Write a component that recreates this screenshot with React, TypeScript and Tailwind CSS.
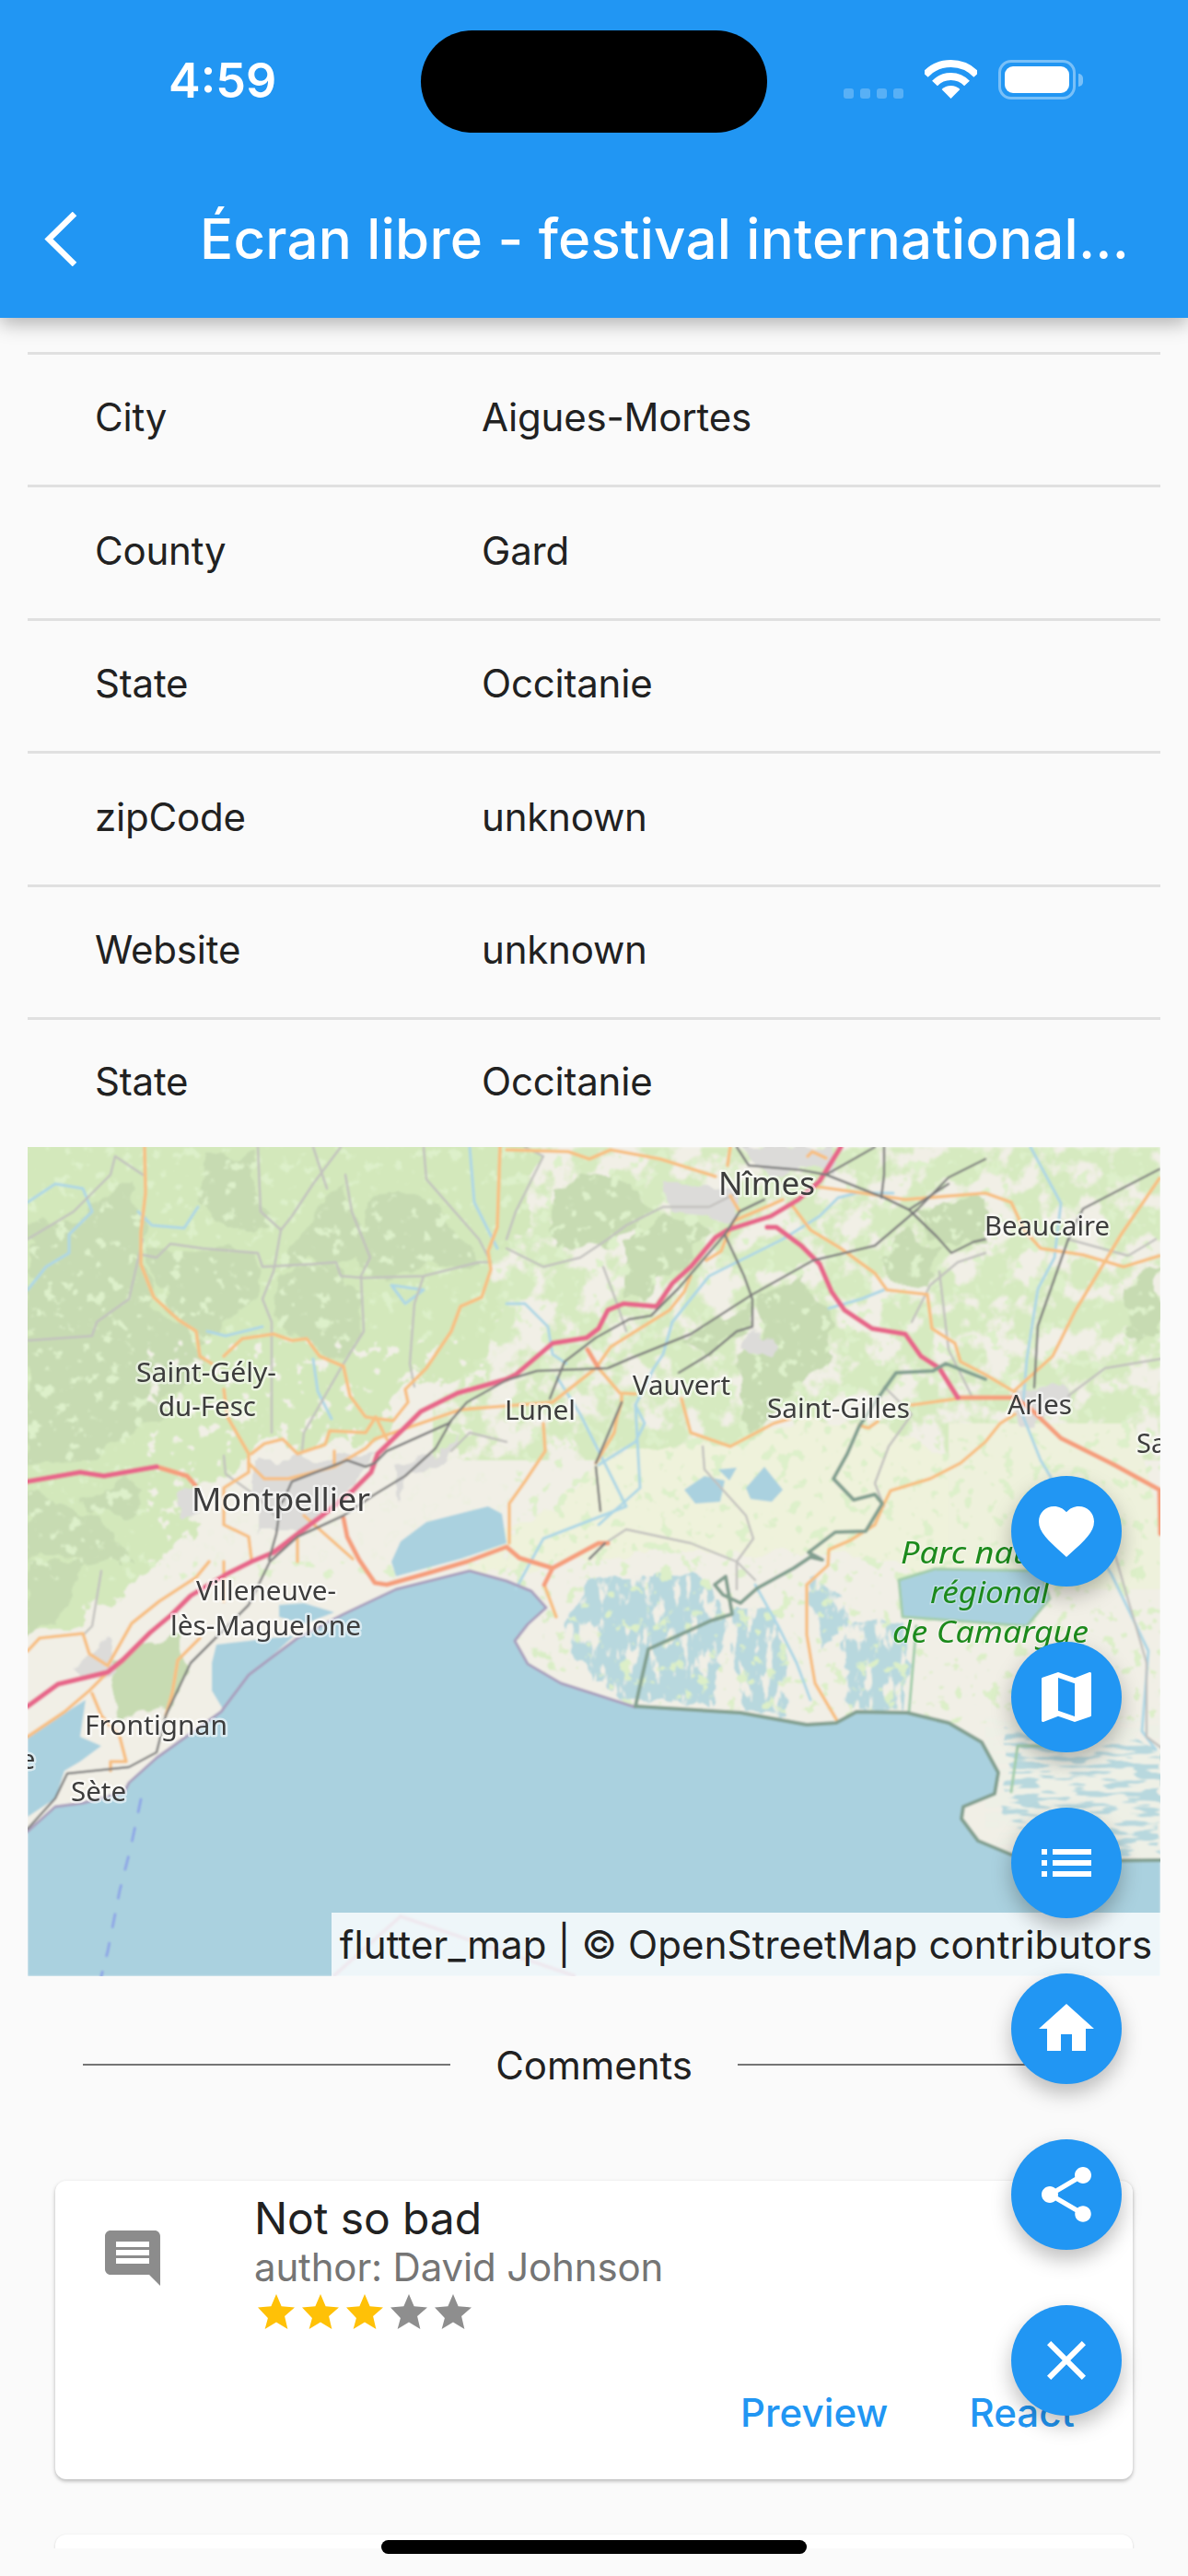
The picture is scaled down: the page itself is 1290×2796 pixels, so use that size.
import React from "react";

const MOTOR = [
  "883,0 860,37 837,57 807,75 760,90 747,98 720,130 700,148 683,173 647,170 630,177 620,197 607,207 570,213 530,247 520,252 467,267 427,287 407,307 380,333 373,353 353,373 320,400 293,420 267,440 243,450 217,463 177,487 157,507 133,527 103,557 87,570 33,583 0,607",
  "803,87 813,87 840,107 860,127 873,157 887,177 917,197 953,203 970,227 990,240 1010,272",
  "0,363 57,353 83,357 140,347",
];
const TRUNK = [
  "1010,272 1072,272 1090,285 1122,316 1180,345 1229,372 1230,420",
  "140,347 173,357 182,367",
  "343,403 347,423 360,448 377,473 390,475 433,463 477,450 520,434 534,446 570,457 620,430 630,430",
  "570,457 561,475",
  "608,220 620,240",
];
const PRIMARY = [
  "127,0 128,50 123,93 123,127 137,163 163,187 183,200 187,227 200,235",
  "213,227 233,208 267,203 287,210 303,208 317,227 343,238 350,270 367,293 397,297 413,277 410,263 433,240 460,200 470,173 493,163 503,133 500,113 510,87 513,0",
  "213,263 217,293 240,333 240,353 213,370 213,410 240,423 243,447",
  "243,333 257,322 277,317 293,333 323,323 328,308 367,310 378,293 390,317",
  "333,330 333,345",
  "240,343 257,360 283,360 333,347 367,327 377,317 470,285 570,277",
  "300,400 353,447",
  "0,547 13,533 60,528 67,550 87,563 113,517 143,493 183,467 197,450",
  "0,640 40,613 67,590 87,570",
  "70,593 80,617 100,640 107,667 90,667 90,677",
  "187,533 163,557 157,593 150,617",
  "213,493 213,450",
  "293,450 293,420",
  "570,277 617,240 633,217 660,200 697,177 713,157 720,140",
  "737,123 753,113 758,100 767,80 807,63 820,57",
  "520,3 587,5 610,13 633,3 687,13 747,32",
  "763,53 773,70",
  "760,20 763,0",
  "857,43 907,50 953,57 1040,50 1068,60 1082,90 1100,110 1146,117 1190,130 1229,118",
  "830,63 850,90 883,110 920,137 933,155 977,160 982,197 1007,213 1013,233 1040,247 1072,266",
  "847,10 852,5 867,12",
  "620,240 643,267 660,268",
  "645,270 645,277 640,293 637,310 617,343",
  "710,273 720,310 763,325 810,300 827,295",
  "560,300 562,330 540,363 523,387 523,430",
  "960,280 1010,273",
  "903,302 913,305 923,298",
  "1072,290 1056,300 1040,320 1013,343 980,360 937,373 930,387 920,410 893,427 870,437 869,454 846,475 846,529 855,582 878,621",
  "1229,34 1188,94 1138,177 1113,227 1072,264",
  "561,475 574,510",
];
const RAIL = [
  "1040,13 1000,33 967,67 920,107 887,115 853,123 787,160 720,203 653,230 630,240 553,243 520,253 477,277 457,300 390,330 377,343 367,347 347,340 287,363 277,385",
  "460,297 443,327 410,357 377,377 343,400 293,423 263,450 240,497 200,537 177,560 150,617 140,657 110,673 43,680 30,707 0,740",
  "567,273 583,233 617,207 653,187 677,183 707,153 757,95 773,70 800,57",
  "770,0 783,20 840,25 867,30 930,55 957,68 987,97 1003,115 1027,103 1040,100",
  "757,95 778,140 787,165 787,195 770,200 740,225 707,245",
  "930,0 930,30 927,55",
  "867,30 920,0",
  "957,68 1000,40",
  "275,385 270,420 262,448",
  "1229,24 1146,67 1130,100 1097,194 1093,261",
  "617,347 622,395",
  "627,430 610,447",
  "645,277 617,343",
];
const MINOR = [
  "0,100 50,70 90,30 95,10 125,30",
  "125,100 110,165 75,190 70,205 0,210",
  "125,117 140,120 155,105 190,110 250,115 255,130 310,127 335,125 340,140 365,142 430,140 490,125 503,125",
  "250,0 253,70 275,90 267,135 255,165 265,190 265,240 265,310",
  "340,0 310,40 287,75 275,90",
  "310,0 325,45",
  "345,30 352,70 372,120 362,140 365,200 340,240 300,310 298,330",
  "430,0 433,35 490,100 503,125",
  "430,140 420,170 415,235 420,260",
  "213,335 215,355 250,380 268,400",
  "80,460 70,520 60,530",
  "460,330 480,310 520,320",
  "540,0 560,10 530,70 520,100",
  "520,110 560,130 600,120 630,100 650,85 690,65 740,65 770,50",
  "625,130 640,170 650,200",
  "990,135 1000,220 1025,270",
  "930,260 960,290 935,325 920,365 930,390",
  "733,325 735,350 780,400 788,425 770,450 770,480",
  "627,430 650,415 720,430 770,450 790,470",
  "1180,440 1215,560 1215,640 1235,655",
  "1130,100 1195,118 1225,100",
  "1130,270 1170,240 1230,230",
  "960,190 980,150 1010,125 1040,115",
];
const RIVERS = [
  "0,60 30,40 60,45 70,70 45,95 45,115 20,130 0,155",
  "120,70 135,85 170,88 185,65",
  "195,200 215,205 255,195",
  "310,230 315,265 330,295",
  "395,150 430,155 410,170 395,150",
  "480,0 485,60 510,110",
  "520,170 540,170 565,195 570,225 585,235",
  "575,250 600,290 620,330 650,390 560,425 530,480",
  "620,345 660,320 670,300 660,280 665,370 620,410",
  "700,190 690,225 680,240 660,280",
  "700,190 740,140 780,120 820,100 860,75 880,55 900,50 940,50",
  "870,175 905,165 930,155",
  "1089,0 1122,61 1115,120 1097,154 1085,230 1080,290 1100,340 1130,390 1177,464 1217,547 1210,634 1225,654",
  "790,475 815,520 835,560 850,600",
];
const FORESTS = [
  "0,90 60,70 120,30 125,120 135,165 180,200 190,240 130,300 70,340 0,350",
  "130,105 250,115 255,135 225,190 190,210 165,185 135,150",
  "190,10 250,10 250,60 270,90 240,90 205,90 190,60",
  "275,130 335,125 360,165 360,210 340,230 310,210 265,190",
  "280,110 340,40 360,90 370,125 280,125",
  "370,60 430,50 470,100 490,125 370,140 360,110",
  "0,370 50,385 90,420 120,450 60,450 20,440 0,450",
  "0,450 60,450 45,500 0,530",
  "87,560 165,530 175,560 150,610 95,620",
  "570,50 600,30 650,35 680,70 640,100 600,115 570,110",
  "650,100 690,75 740,90 700,135 670,165 650,165",
  "710,210 780,170 785,195 740,225",
  "787,165 845,135 870,190 880,230 835,260 800,300 780,310 770,230 800,200",
  "960,70 1000,60 1040,60 1040,100 1003,113 985,95",
  "950,100 990,105 970,155 940,150 925,120",
  "1190,150 1230,130 1230,210 1200,215",
  "60,380 100,360 130,375 110,400 70,400",
];
const MARSH = [
  "600,470 640,465 700,465 740,470 755,490 750,560 745,605 660,600 610,575 585,520",
  "760,500 805,500 820,560 830,618 780,612 768,570",
  "885,515 950,515 960,560 955,612 890,612",
  "850,470 885,480 895,510 860,540",
  "1060,630 1100,620 1120,650 1200,640 1230,660 1230,770 1090,770 1060,720 1065,680",
];
const SEA =
  "0,743 30,716 60,712 105,700 110,690 140,663 210,613 240,573 293,533 343,507 400,480 480,460 520,471 547,482 563,500 543,518 529,536 543,561 579,582 660,608 774,614 846,627 878,625 900,613 955,614 1000,625 1036,646 1054,679 1050,702 1016,716 1014,729 1032,753 1068,768 1127,775 1230,774 1230,900 0,900";
const LAKES = [
  "395,450 405,428 433,407 500,390 515,398 520,430 470,447 400,466",
  "205,540 290,530 240,575 212,610 200,590 200,560",
  "273,497 300,495 333,505 300,518 273,510",
  "0,640 63,600 57,640 80,650 57,667 40,677 30,707 0,727",
  "713,372 735,357 757,362 752,385 725,387",
  "750,350 770,348 762,362",
  "780,370 800,347 820,372 808,385 785,382",
  "946,470 985,458 1100,460 1110,490 1085,520 950,510",
];
const LABELS: [string, number, number, number, number][] = [
  ["Nîmes", 750, 52, 105, 35],
  ["Montpellier", 178, 395, 194, 35],
  ["Saint-Gély-", 118, 255, 152, 29],
  ["du-Fesc", 142, 292, 106, 29],
  ["Lunel", 518, 296, 77, 29],
  ["Vauvert", 657, 269, 106, 29],
  ["Saint-Gilles", 803, 294, 155, 29],
  ["Beaucaire", 1039, 96, 136, 29],
  ["Arles", 1064, 290, 70, 29],
  ["Villeneuve-", 183, 492, 152, 29],
  ["lès-Maguelone", 155, 530, 207, 29],
  ["Frontignan", 62, 638, 155, 29],
  ["Sète", 47, 710, 60, 29],
];

function Poly({ list, color, width, dash }: { list: string[]; color: string; width: number; dash?: string }) {
  return (
    <g fill="none" stroke={color} strokeWidth={width} strokeLinejoin="round" strokeLinecap="round" strokeDasharray={dash}>
      {list.map((p, i) => (
        <polyline key={i} points={p} />
      ))}
    </g>
  );
}

function MapArt() {
  return (
    <svg viewBox="0 0 1230 900" className="block w-[1230px] h-[900px]" fontFamily="'Noto Sans', sans-serif">
      <defs>
        <filter id="soft" x="0" y="0" width="100%" height="100%">
          <feGaussianBlur stdDeviation="1.1" />
        </filter>
        <filter id="lbl" x="-5%" y="-20%" width="110%" height="140%">
          <feGaussianBlur stdDeviation="0.6" />
        </filter>
        <filter id="rough" x="-10%" y="-10%" width="120%" height="120%">
          <feTurbulence type="fractalNoise" baseFrequency="0.03" numOctaves="3" seed="4" result="n" />
          <feDisplacementMap in="SourceGraphic" in2="n" scale="30" xChannelSelector="R" yChannelSelector="G" />
        </filter>
        <filter id="rough2" x="-10%" y="-10%" width="120%" height="120%">
          <feTurbulence type="fractalNoise" baseFrequency="0.02" numOctaves="4" seed="11" result="n" />
          <feDisplacementMap in="SourceGraphic" in2="n" scale="90" xChannelSelector="R" yChannelSelector="G" />
        </filter>
        <filter id="speckA" x="0" y="0" width="100%" height="100%">
          <feTurbulence type="fractalNoise" baseFrequency="0.03" numOctaves="4" seed="9" result="n" />
          <feColorMatrix in="n" type="matrix" values="0 0 0 0 0 0 0 0 0 0 0 0 0 0 0 8 0 0 0 -3.3" result="m" />
          <feComposite in="SourceGraphic" in2="m" operator="in" />
        </filter>
        <filter id="speckB" x="0" y="0" width="100%" height="100%">
          <feTurbulence type="fractalNoise" baseFrequency="0.07" numOctaves="3" seed="21" result="n" />
          <feColorMatrix in="n" type="matrix" values="0 0 0 0 0 0 0 0 0 0 0 0 0 0 0 12 0 0 0 -7.4" result="m" />
          <feComposite in="SourceGraphic" in2="m" operator="in" />
        </filter>
        <filter id="speckC" x="0" y="0" width="100%" height="100%">
          <feTurbulence type="fractalNoise" baseFrequency="0.1 0.035" numOctaves="4" seed="5" result="n" />
          <feColorMatrix in="n" type="matrix" values="0 0 0 0 0 0 0 0 0 0 0 0 0 0 0 10 0 0 0 -5.6" result="m" />
          <feComposite in="SourceGraphic" in2="m" operator="in" />
        </filter>
        <filter id="stripes" x="0" y="0" width="100%" height="100%">
          <feTurbulence type="fractalNoise" baseFrequency="0.03 0.16" numOctaves="2" seed="14" result="n" />
          <feColorMatrix in="n" type="matrix" values="0 0 0 0 0 0 0 0 0 0 0 0 0 0 0 14 0 0 0 -6" result="m" />
          <feComposite in="SourceGraphic" in2="m" operator="in" />
        </filter>
      </defs>
      <g filter="url(#soft)">
        <rect width="1230" height="900" fill="#f1efe6" />
        <rect x="440" width="790" height="340" fill="#d6eac0" filter="url(#speckA)" />
        <polygon points="-60,-60 560,-60 520,120 500,220 420,280 360,330 230,330 180,410 130,470 60,520 -60,540" fill="#d3e8bb" filter="url(#rough2)" />
        <polygon points="470,470 500,420 560,400 640,330 760,320 840,300 930,300 1000,340 1060,300 1100,320 1100,420 1000,470 860,440 640,440" fill="#eff2db" filter="url(#rough)" />
        <polygon points="1000,300 1060,300 1200,300 1230,400 1230,480 1120,480 1000,440" fill="#eef1dc" />
        <g filter="url(#rough)" fill="#c7dbb2">
          {FORESTS.map((p, i) => (
            <polygon key={i} points={p} />
          ))}
        </g>
        <rect x="520" y="300" width="710" height="320" fill="#d9edc6" filter="url(#speckB)" />
        <rect width="1230" height="470" fill="#ddf0ca" filter="url(#speckB)" />
        <rect x="130" y="210" width="400" height="240" fill="#f1efe6" filter="url(#speckB)" />
        <g fill="#dcdbd9" filter="url(#rough)">
          <polygon points="770,0 880,0 870,25 790,25" />
          <polygon points="690,40 770,40 770,80 700,70" />
          <polygon points="250,335 380,335 350,370 300,420 250,420" />
          <polygon points="400,345 470,320 420,355 400,380" />
          <polygon points="165,370 190,370 190,400 165,400" />
          <polygon points="90,530 95,570 55,580 45,560" />
          <polygon points="1070,265 1130,260 1130,295 1085,300" />
          <polygon points="780,200 810,205 800,225 770,225" />
        </g>
        <g filter="url(#rough)" fill="#b8d8de">
          {MARSH.map((p, i) => (
            <polygon key={i} points={p} />
          ))}
        </g>
        <rect x="570" y="455" width="400" height="165" fill="#f1efe6" filter="url(#speckC)" />
        <rect x="1040" y="620" width="190" height="155" fill="#eef0e6" filter="url(#stripes)" />
        <rect x="570" y="455" width="660" height="170" fill="#dcefc8" filter="url(#speckB)" />
        <polygon points={SEA} fill="#aad1df" />
        <g fill="#aad1df">
          {LAKES.map((p, i) => (
            <polygon key={i} points={p} />
          ))}
        </g>
        <Poly list={["946,470 985,458 1100,460 1110,490 1085,520 950,510 946,470", "965,520 957,614", "1120,650 1075,650 1068,700"]} color="#a3cdab" width={3} />
        <Poly list={RIVERS} color="#aed7e5" width={3} />
        <Poly list={MINOR} color="#c2c1be" width={2.4} />
        <Poly list={["0,743 30,716 60,712 105,700 110,690 140,663 210,613 240,573 293,533 343,507 400,480 480,460 520,471 547,482 563,500 543,518 529,536 543,561 579,582 660,608"]} color="#a99fbd" width={3} />
        <Poly list={PRIMARY} color="#f7c083" width={3.6} />
        <Poly list={TRUNK} color="#f59f7d" width={5} />
        <Poly list={MOTOR} color="#e7688b" width={5.5} />
        <Poly list={RAIL} color="#7d7d7d" width={2.5} />
        <Poly
          list={[
            "1040,252 997,235 983,243 943,245 930,263 903,303 890,333 875,360 897,383 920,377 928,387 910,417 877,418 848,440 863,448 850,445 832,457 792,479 774,495 755,486 746,475 758,466 765,507 742,514 674,545 660,607",
            "660,607 774,614 846,627 878,625 900,613 955,614 1000,625 1036,646 1054,679 1050,702 1016,716 1014,729 1032,753 1068,768 1127,775 1230,774",
          ]}
          color="#83a091"
          width={4}
        />
        <Poly list={["123,708 112,760 100,807 87,873 80,900"]} color="#8ea6e6" width={3} dash="14 18" />
        <polyline points="332,900 405,835 595,900" fill="none" stroke="#a88fae" strokeWidth="4" />
      </g>
      <g filter="url(#lbl)" fill="#3c3c3c" stroke="#ffffff" strokeOpacity="0.55" strokeWidth="5" paintOrder="stroke" strokeLinejoin="round">
        {LABELS.map(([t, x, y, w, s]) => (
          <text key={t} x={x} y={y} fontSize={s} textLength={w} lengthAdjust="spacingAndGlyphs">
            {t}
          </text>
        ))}
        <text x="1204" y="332" fontSize="29">Sa</text>
        <text x="-8" y="675" fontSize="29">e</text>
      </g>
      <g filter="url(#lbl)" fill="#1d8a1d" fontStyle="italic" fontSize="33" stroke="#ffffff" strokeOpacity="0.25" strokeWidth="3" paintOrder="stroke">
        <text x="948" y="452" textLength="196" lengthAdjust="spacingAndGlyphs">Parc naturel</text>
        <text x="980" y="495" textLength="129" lengthAdjust="spacingAndGlyphs">régional</text>
        <text x="939" y="538" textLength="213" lengthAdjust="spacingAndGlyphs">de Camargue</text>
      </g>
    </svg>
  );
}

const ICONS = {
  heart:
    "M12 21.35l-1.45-1.32C5.4 15.36 2 12.28 2 8.5 2 5.42 4.42 3 7.5 3c1.74 0 3.41.81 4.5 2.09C13.09 3.81 14.76 3 16.5 3 19.58 3 22 5.42 22 8.5c0 3.78-3.4 6.86-8.55 11.54L12 21.35z",
  map: "M20.5 3l-.16.03L15 5.1 9 3 3.36 4.9c-.21.07-.36.25-.36.48V20.5c0 .28.22.5.5.5l.16-.03L9 18.9l6 2.1 5.64-1.9c.21-.07.36-.25.36-.48V3.5c0-.28-.22-.5-.5-.5zM15 19l-6-2.11V5l6 2.11V19z",
  list: "M3 13h2v-2H3v2zm0 4h2v-2H3v2zm0-8h2V7H3v2zm4 4h14v-2H7v2zm0 4h14v-2H7v2zM7 7v2h14V7H7z",
  home: "M10 20v-6h4v6h5v-8h3L12 3 2 12h3v8z",
  share:
    "M18 16.08c-.76 0-1.44.3-1.96.77L8.91 12.7c.05-.23.09-.46.09-.7s-.04-.47-.09-.7l7.05-4.11c.54.5 1.25.81 2.04.81 1.66 0 3-1.34 3-3s-1.34-3-3-3-3 1.34-3 3c0 .24.04.47.09.7L8.04 9.81C7.5 9.31 6.79 9 6 9c-1.66 0-3 1.34-3 3s1.34 3 3 3c.79 0 1.5-.31 2.04-.81l7.12 4.16c-.05.21-.08.43-.08.65 0 1.61 1.31 2.92 2.92 2.92 1.61 0 2.92-1.31 2.92-2.92s-1.31-2.92-2.92-2.92z",
  close:
    "M19 6.41L17.59 5 12 10.59 6.41 5 5 6.41 10.59 12 5 17.59 6.41 19 12 13.41 17.59 19 19 17.59 13.41 12z",
};
const STAR = "M12 17.27L18.18 21l-1.64-7.03L22 9.24l-7.19-.61L12 2 9.19 8.63 2 9.24l5.46 5.73L5.82 21z";

function Fab({ d }: { d: string }) {
  return (
    <div className="w-[120px] h-[120px] rounded-full bg-[#2196f3] flex items-center justify-center shadow-[0_10px_22px_rgba(0,0,0,0.26)]">
      <svg viewBox="0 0 24 24" className="w-[72px] h-[72px]" fill="#ffffff">
        <path d={d} />
      </svg>
    </div>
  );
}

function Row({ label, value, last }: { label: string; value: string; last?: boolean }) {
  return (
    <div className={`flex items-center pb-[5px] border-t-[3px] border-[#e0e0e0] text-[42px] tracking-[-0.2px] text-[#212121] ${last ? "h-[141px]" : "h-[144.5px]"}`}>
      <div className="w-[493px] pl-[73px]">{label}</div>
      <div>{value}</div>
    </div>
  );
}

function Wifi() {
  return (
    <svg viewBox="0 0 57 42" className="w-[57px] h-[42px]" fill="none" stroke="#ffffff" strokeWidth="8">
      <path d="M0.7 16.1 A38 38 0 0 1 56.3 16.1" />
      <path d="M11 25.6 A24 24 0 0 1 46 25.6" />
      <path d="M28.5 42 L18.6 32 A14 14 0 0 1 38.4 32 Z" fill="#ffffff" stroke="none" />
    </svg>
  );
}

function Battery() {
  return (
    <div className="flex items-center gap-[3px]">
      <div className="w-[84px] h-[43px] rounded-[14px] border-[3px] border-white/40 p-[4px]">
        <div className="w-full h-full rounded-[9px] bg-white" />
      </div>
      <div className="w-[5px] h-[14px] rounded-r-[5px] bg-white/40" />
    </div>
  );
}

export default function App() {
  return (
    <div className="relative w-[1290px] h-[2796px] overflow-hidden bg-[#fafafa] font-['Inter',sans-serif]">
      <div className="relative z-10 h-[345px] bg-[#2196f3] shadow-[0_6px_20px_rgba(0,0,0,0.3)] text-white">
        <div className="relative h-[177px]">
          <div className="absolute left-[183px] top-[58px] text-[52px] leading-[60px] font-semibold">4:59</div>
          <div className="absolute left-[457px] top-[33px] w-[376px] h-[111px] rounded-[56px] bg-black" />
          <div className="absolute left-[916px] top-[96px] flex gap-[7px]">
            <div className="w-[11px] h-[11px] rounded-[3px] bg-white/25" />
            <div className="w-[11px] h-[11px] rounded-[3px] bg-white/25" />
            <div className="w-[11px] h-[11px] rounded-[3px] bg-white/25" />
            <div className="w-[11px] h-[11px] rounded-[3px] bg-white/25" />
          </div>
          <div className="absolute left-[1004px] top-[65px]">
            <Wifi />
          </div>
          <div className="absolute left-[1084px] top-[65px]">
            <Battery />
          </div>
        </div>
        <div className="flex items-center h-[168px] pb-[4px]">
          <svg viewBox="0 0 36 59" className="ml-[48px] w-[36px] h-[59px]" fill="none" stroke="#ffffff" strokeWidth="6.5">
            <path d="M33 2 L5 29.5 L33 57" />
          </svg>
          <div className="ml-[133px] text-[60px] leading-[72px] font-medium whitespace-nowrap tracking-[0.24px]">
            Écran libre - festival international...
          </div>
        </div>
      </div>

      <div className="h-[2421px] overflow-hidden">
        <div className="mx-[30px] pt-[36.5px]">
          <Row label="City" value="Aigues-Mortes" />
          <Row label="County" value="Gard" />
          <Row label="State" value="Occitanie" />
          <Row label="zipCode" value="unknown" />
          <Row label="Website" value="unknown" />
          <Row label="State" value="Occitanie" last />
          <div className="relative h-[900px] overflow-hidden">
            <MapArt />
            <div className="absolute right-0 bottom-0 w-[900px] h-[69px] bg-white/80 flex items-center justify-center text-[42px] tracking-[0.12px] text-[#212121] whitespace-nowrap">
              flutter_map | © OpenStreetMap contributors
            </div>
          </div>
        </div>

        <div className="mt-[66px] h-[60px] px-[90px] flex items-center text-[#212121]">
          <div className="w-[399px] h-[2px] bg-[#757575]" />
          <div className="w-[312px] text-center text-[42px] tracking-[-0.1px]">Comments</div>
          <div className="w-[399px] h-[2px] bg-[#757575]" />
        </div>

        <div className="relative mx-[60px] mt-[96px] h-[324px] rounded-[12px] bg-white shadow-[0_2px_4px_rgba(0,0,0,0.28)] flex flex-col">
          <div className="flex">
            <svg viewBox="0 0 24 24" className="ml-[48px] mt-[48px] w-[72px] h-[72px]" fill="#8c8c8c">
              <path d="M21.99 4c0-1.1-.89-2-1.99-2H4c-1.1 0-2 .9-2 2v12c0 1.1.9 2 2 2h14l4 4-.01-18zM18 14H6v-2h12v2zm0-3H6V9h12v2zm0-3H6V6h12v2z" />
            </svg>
            <div className="ml-[96px] pt-[13px]">
              <div className="text-[48px] leading-[56px] tracking-[-0.1px] text-[#212121]">Not so bad</div>
              <div className="text-[42px] leading-[50px] tracking-[-0.16px] text-[#757575]">author: David Johnson</div>
              <div className="flex">
                {["#ffc107", "#ffc107", "#ffc107", "#8e8e8e", "#8e8e8e"].map((c, i) => (
                  <svg key={i} viewBox="0 0 24 24" className="w-[48px] h-[48px]" fill={c}>
                    <path d={STAR} />
                  </svg>
                ))}
              </div>
            </div>
          </div>
          <div className="mt-auto mb-[47px] mr-[63px] flex justify-end gap-[88px] text-[42px] leading-[50px] font-medium tracking-[0.1px] text-[#2196f3]">
            <div>Preview</div>
            <div>React</div>
          </div>
        </div>

        <div className="mx-[60px] mt-[60px] h-[120px] rounded-[12px] bg-white shadow-[0_1px_3px_rgba(0,0,0,0.18)]" />
      </div>

      <div className="absolute left-[1098px] top-[1602px] flex flex-col gap-[60px]">
        <Fab d={ICONS.heart} />
        <Fab d={ICONS.map} />
        <Fab d={ICONS.list} />
        <Fab d={ICONS.home} />
        <Fab d={ICONS.share} />
        <Fab d={ICONS.close} />
      </div>

      <div className="absolute left-[414px] top-[2757px] w-[462px] h-[15px] rounded-full bg-black" />
    </div>
  );
}
